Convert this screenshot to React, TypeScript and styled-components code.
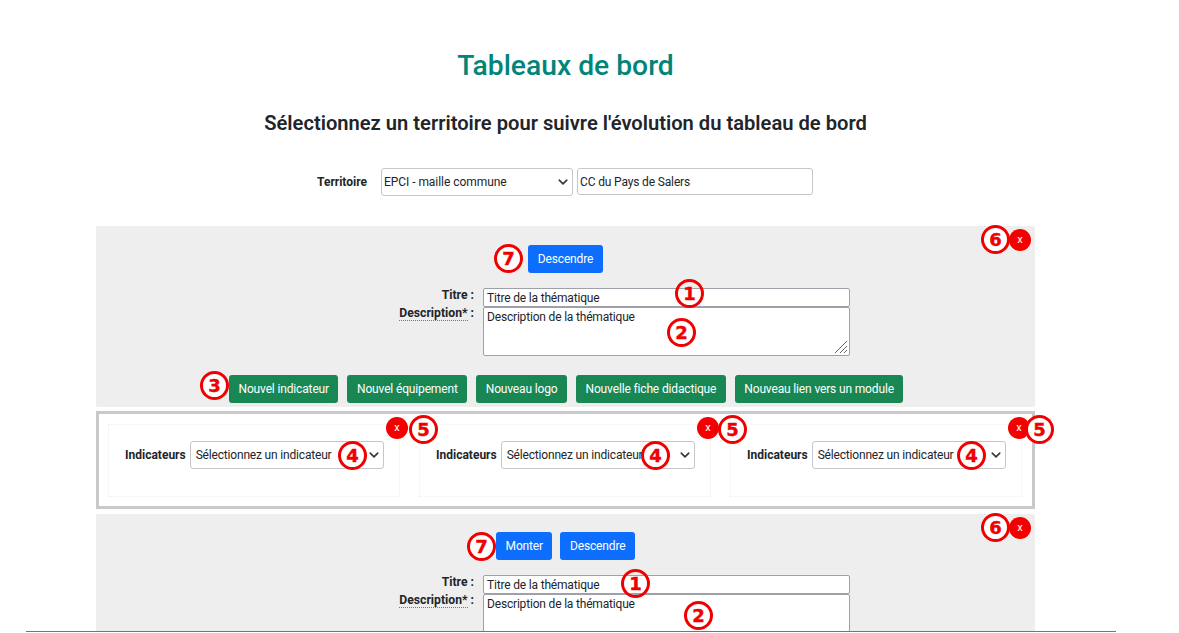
import React from "react";
import styled, { createGlobalStyle } from "styled-components";

const Global = createGlobalStyle`
  html, body { margin: 0; padding: 0; background: #fff; }
  body { font-family: Roboto, "Liberation Sans", sans-serif; color: #212529; }
  * { box-sizing: border-box; }
`;

const Viewport = styled.div`
  width: 1179px;
  height: 633px;
  display: flex;
  flex-direction: column;
  overflow: hidden;
`;
const Main = styled.main`
  flex: 1;
  min-height: 0;
  overflow: hidden;
  padding: 0 144px 0 96px;
`;
const FooterLine = styled.div`
  height: 1px;
  margin: 0 63px 1px 26px;
  background: #3f8f80;
`;
const Title = styled.h1`
  margin: 0;
  padding-top: 48px;
  height: 86px;
  line-height: 36px;
  font-size: 28.25px;
  font-weight: 500;
  color: #00857a;
  text-align: center;
`;
const Subtitle = styled.h2`
  margin: 0;
  padding-top: 24px;
  height: 56px;
  line-height: 26px;
  font-size: 20.15px;
  font-weight: 600;
  color: #212529;
  text-align: center;
`;
const TerritoryRow = styled.div`
  display: flex;
  align-items: center;
  height: 27px;
  margin-top: 26px;
  padding-left: 221px;
`;
const StrongLabel = styled.label`
  font-size: 12px;
  font-weight: 700;
  color: #212529;
`;
const TerritoryLabel = styled(StrongLabel)`
  width: 64px;
`;
const SelectBox = styled.div<{ $w: number; $pad: number; $spacing: number }>`
  width: ${(p) => p.$w}px;
  height: 28px;
  flex: none;
  display: flex;
  align-items: center;
  justify-content: space-between;
  padding: 0 4px 0 ${(p) => p.$pad}px;
  font-size: 12px;
  letter-spacing: ${(p) => p.$spacing}px;
  color: #212529;
  background: #fff;
  border: 1px solid #c4c6c9;
  border-radius: 3px;
`;
const TerritorySelect = styled(SelectBox)`
  margin-right: 4px;
`;
const TerritoryInput = styled.div`
  width: 236px;
  height: 27px;
  display: flex;
  align-items: center;
  padding-left: 2px;
  font-size: 12px;
  letter-spacing: -0.15px;
  border: 1px solid #c4c6c9;
  border-radius: 3px;
`;
const Section = styled.section<{ $h?: number; $mt: number }>`
  position: relative;
  margin-top: ${(p) => p.$mt}px;
  ${(p) => (p.$h ? `height: ${p.$h}px;` : "")}
  background: #eeeeee;
  border-radius: 2px;
`;
const MoveRow = styled.div<{ $pt: number }>`
  display: flex;
  justify-content: center;
  gap: 8px;
  padding-top: ${(p) => p.$pt}px;
`;
const Button = styled.button<{ $tone: "blue" | "green" }>`
  height: 28px;
  padding: 0 9.5px;
  border: none;
  border-radius: 3px;
  font-family: inherit;
  font-size: 12px;
  letter-spacing: -0.15px;
  color: #fff;
  background: ${(p) => (p.$tone === "blue" ? "#0d6efd" : "#198754")};
`;
const FormGrid = styled.div`
  display: grid;
  grid-template-columns: 378px 367px;
  grid-auto-rows: auto;
  margin-top: 15px;
  column-gap: 9px;
`;
const FieldLabel = styled.label<{ $dotted?: boolean }>`
  justify-self: end;
  font-size: 12.2px;
  font-weight: 700;
  line-height: 14px;
  margin-top: ${(p) => (p.$dotted ? "-1px" : "0")};
  color: #212529;
  span {
    ${(p) => (p.$dotted ? "border-bottom: 1px dotted #777;" : "")}
  }
`;
const TitleInput = styled.div`
  height: 19px;
  display: flex;
  align-items: center;
  padding-left: 3px;
  font-size: 12px;
  letter-spacing: -0.18px;
  background: #fff;
  border: 1px solid #a0a0a8;
  border-radius: 2px;
`;
const DescArea = styled.div`
  position: relative;
  height: 49px;
  padding: 2px 3px;
  line-height: 14px;
  font-size: 12px;
  letter-spacing: -0.18px;
  background: #fff;
  border: 1px solid #a0a0a8;
  border-radius: 2px;
`;
const ResizeGrip = styled.svg`
  position: absolute;
  right: 1px;
  bottom: 1px;
`;
const AddRow = styled.div`
  display: flex;
  justify-content: flex-start;
  gap: 9px;
  margin-top: 19px;
  padding-left: 133px;
`;
const IndicatorPanel = styled.div`
  position: relative;
  margin-top: 4px;
  height: 98px;
  border: 3px solid #c9c9c9;
  display: grid;
  grid-template-columns: repeat(3, 292px);
  column-gap: 19px;
  padding: 10px 0 9px 9px;
`;
const IndicatorCell = styled.div`
  border: 1px dotted #efefef;
  display: flex;
  align-items: flex-start;
  gap: 4px;
  padding: 16px 0 0 16px;
`;
const IndicatorLabel = styled(StrongLabel)`
  line-height: 28px;
`;
const Ring = styled.div<{ $x: number; $y: number }>`
  position: absolute;
  left: ${(p) => p.$x}px;
  top: ${(p) => p.$y}px;
  width: 29px;
  height: 29px;
  display: flex;
  align-items: center;
  justify-content: center;
  border: 3.5px solid #f00000;
  border-radius: 50%;
  background: #fff;
  color: #f00000;
  font-size: 18px;
  font-weight: 700;
  font-family: "DejaVu Sans", Roboto, sans-serif;
  -webkit-text-stroke: 0.4px #f00000;
  line-height: 1;
`;
const RingClear = styled(Ring)`
  background: transparent;
`;
const CloseDot = styled.div<{ $x: number; $y: number }>`
  position: absolute;
  left: ${(p) => p.$x}px;
  top: ${(p) => p.$y}px;
  width: 22px;
  height: 22px;
  display: flex;
  align-items: center;
  justify-content: center;
  border-radius: 50%;
  background: #f50000;
  color: #fff;
  font-size: 11px;
  padding-bottom: 1px;
`;

const Chevron = () => (
  <svg width="10" height="10" viewBox="0 0 16 16" fill="none" aria-hidden="true">
    <path d="M2 5l6 6 6-6" stroke="#343a40" strokeWidth="2.6" strokeLinecap="round" strokeLinejoin="round" />
  </svg>
);

const Form = ({ grip }: { grip?: boolean }) => (
  <FormGrid>
    <FieldLabel>Titre :</FieldLabel>
    <TitleInput>Titre de la thématique</TitleInput>
    <FieldLabel $dotted>
      <span>Description*</span> :
    </FieldLabel>
    <DescArea>
      Description de la thématique
      {grip && (
        <ResizeGrip width="15" height="15" viewBox="0 0 15 15" aria-hidden="true">
          <path d="M14 2L2 14M14 7L7 14M14 11L11 14" stroke="#666" strokeWidth="1" />
        </ResizeGrip>
      )}
    </DescArea>
  </FormGrid>
);

const cells = [0, 1, 2];

export default function App() {
  return (
    <Viewport>
      <Global />
      <Main>
        <Title>Tableaux de bord</Title>
        <Subtitle>Sélectionnez un territoire pour suivre l'évolution du tableau de bord</Subtitle>
        <TerritoryRow>
          <TerritoryLabel>Territoire</TerritoryLabel>
          <TerritorySelect $w={192} $pad={2} $spacing={-0.05}>
            EPCI - maille commune
            <Chevron />
          </TerritorySelect>
          <TerritoryInput>CC du Pays de Salers</TerritoryInput>
        </TerritoryRow>

        <Section $mt={31} $h={181}>
          <MoveRow $pt={19}>
            <Button $tone="blue">Descendre</Button>
          </MoveRow>
          <Form grip />
          <AddRow>
            <Button $tone="green">Nouvel indicateur</Button>
            <Button $tone="green">Nouvel équipement</Button>
            <Button $tone="green">Nouveau logo</Button>
            <Button $tone="green">Nouvelle fiche didactique</Button>
            <Button $tone="green">Nouveau lien vers un module</Button>
          </AddRow>
          <Ring $x={885} $y={-1}>6</Ring>
          <CloseDot $x={913} $y={3}>x</CloseDot>
          <Ring $x={398} $y={18}>7</Ring>
          <RingClear $x={579} $y={53}>1</RingClear>
          <RingClear $x={571} $y={92}>2</RingClear>
          <Ring $x={104} $y={145}>3</Ring>
        </Section>

        <IndicatorPanel>
          {cells.map((i) => (
            <IndicatorCell key={i}>
              <IndicatorLabel>Indicateurs</IndicatorLabel>
              <SelectBox $w={194} $pad={5} $spacing={-0.18}>
                Sélectionnez un indicateur
                <Chevron />
              </SelectBox>
            </IndicatorCell>
          ))}
          <CloseDot $x={287} $y={3}>x</CloseDot>
          <Ring $x={310} $y={1}>5</Ring>
          <Ring $x={239} $y={27}>4</Ring>
          <CloseDot $x={598} $y={3}>x</CloseDot>
          <Ring $x={619} $y={1}>5</Ring>
          <Ring $x={542} $y={27}>4</Ring>
          <CloseDot $x={909} $y={3}>x</CloseDot>
          <Ring $x={926} $y={1}>5</Ring>
          <Ring $x={858} $y={27}>4</Ring>
        </IndicatorPanel>

        <Section $mt={5}>
          <MoveRow $pt={18}>
            <Button $tone="blue">Monter</Button>
            <Button $tone="blue">Descendre</Button>
          </MoveRow>
          <Form />
          <Ring $x={885} $y={-1}>6</Ring>
          <CloseDot $x={913} $y={3}>x</CloseDot>
          <Ring $x={371} $y={18}>7</Ring>
          <RingClear $x={525} $y={55}>1</RingClear>
          <RingClear $x={588} $y={87}>2</RingClear>
        </Section>
      </Main>
      <FooterLine />
    </Viewport>
  );
}
